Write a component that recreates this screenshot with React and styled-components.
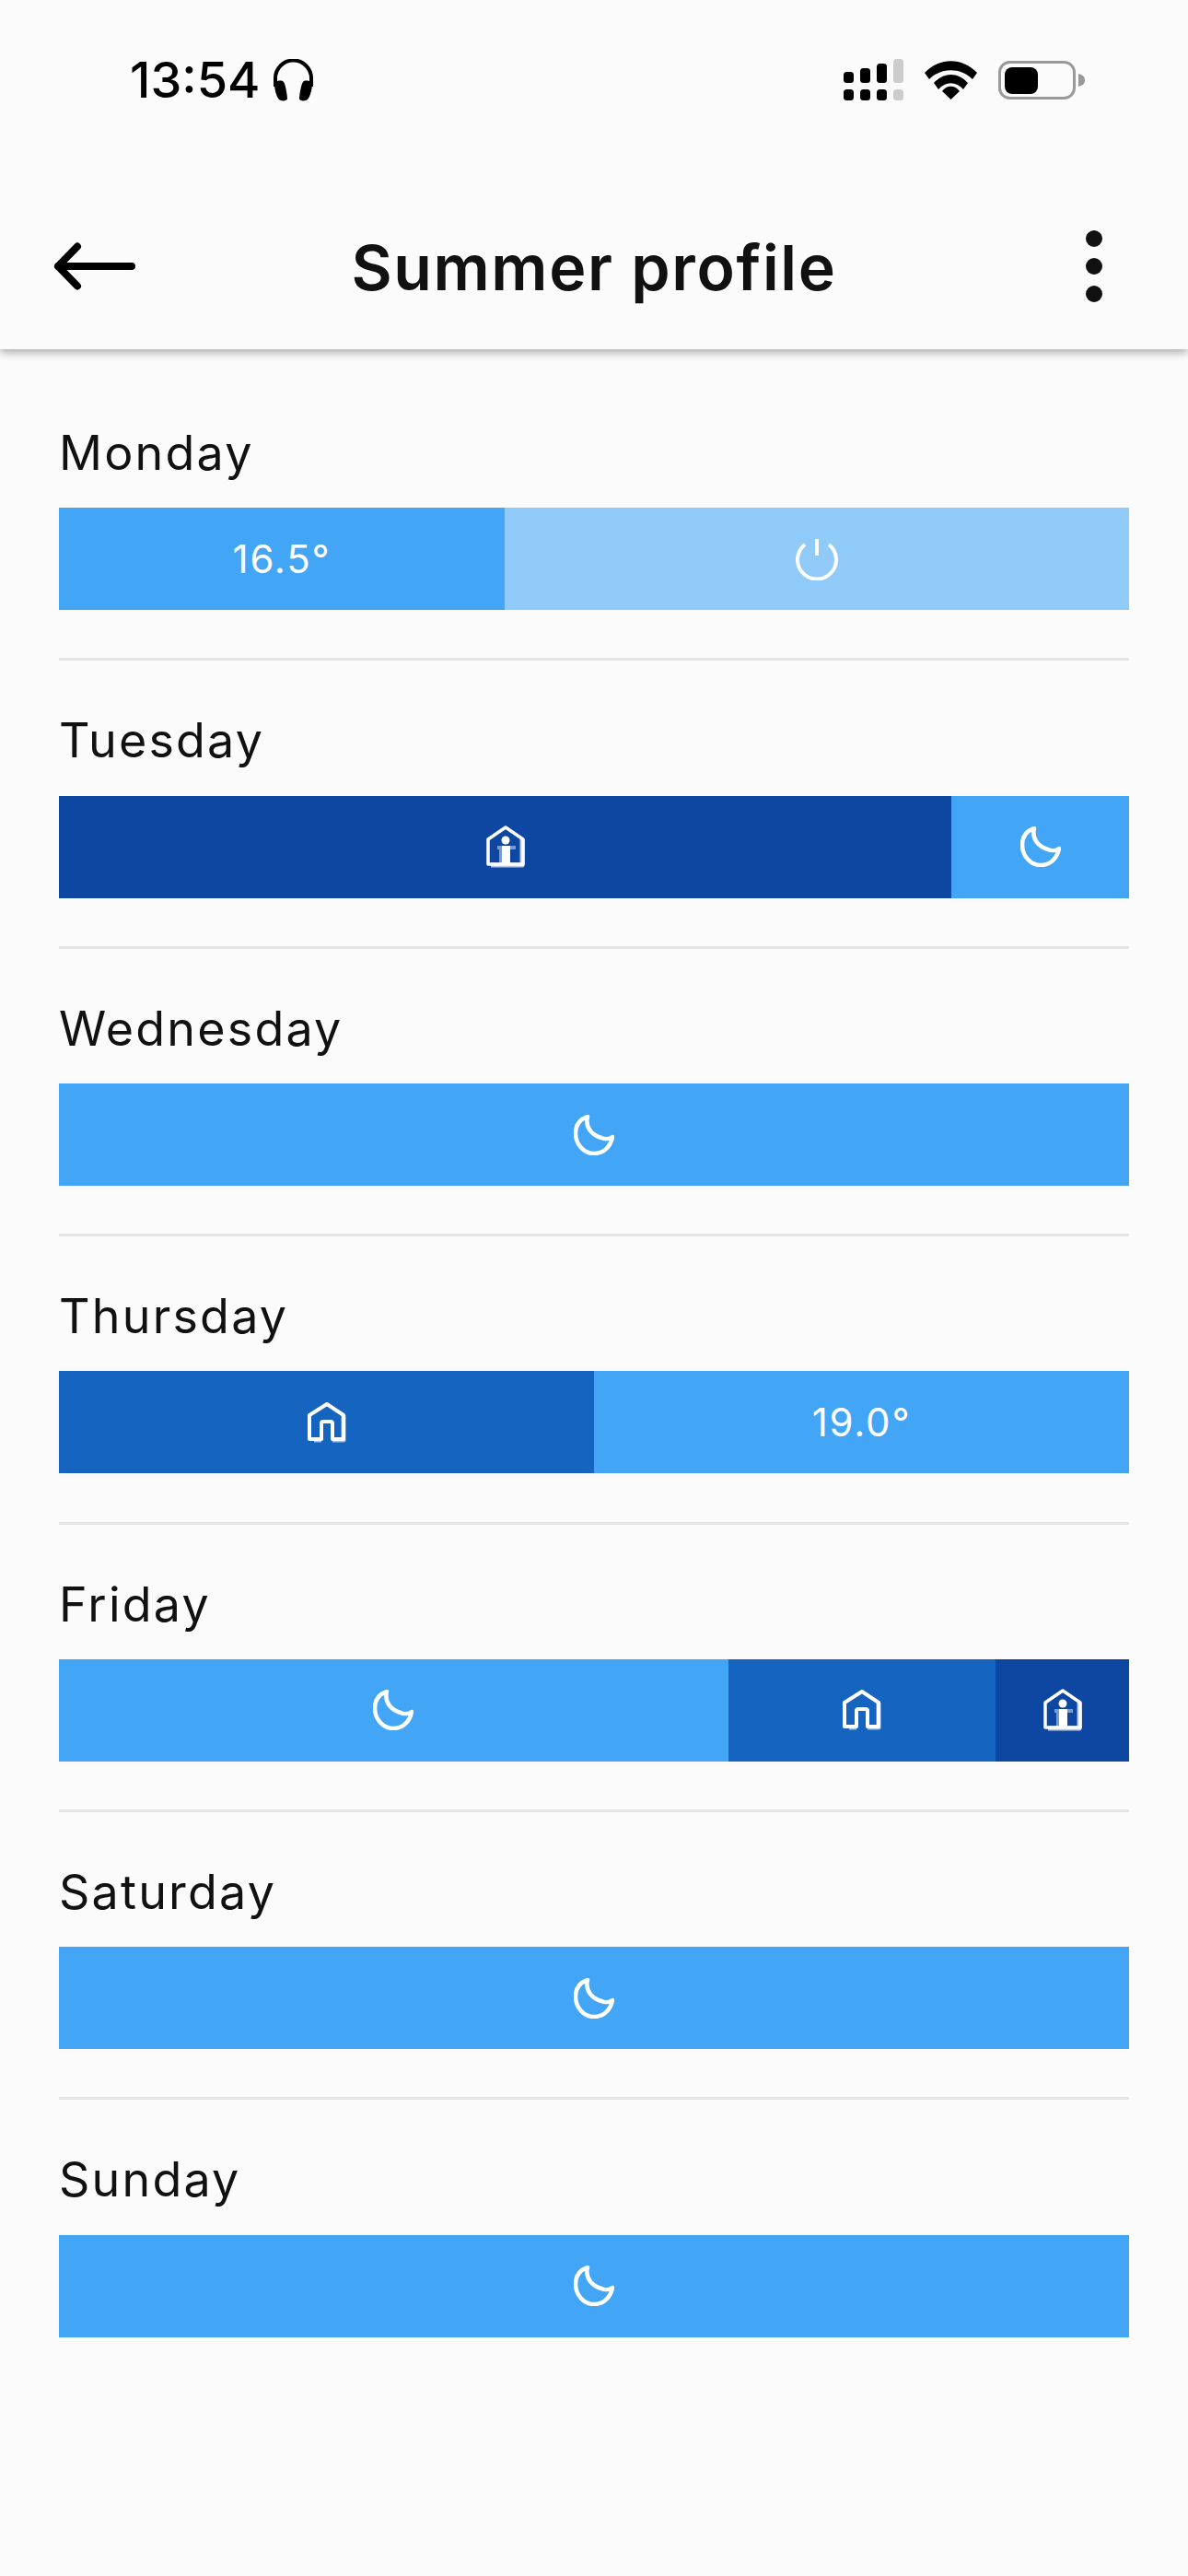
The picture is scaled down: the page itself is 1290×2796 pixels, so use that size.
import React from "react";
import styled, { createGlobalStyle } from "styled-components";

const LIGHT = "#42a5f5";
const PALE = "#90caf9";
const MID = "#1565c0";
const DARK = "#0d47a1";

const days = [
  { name: "Monday", slots: [{ w: 484, bg: LIGHT, text: "16.5°" }, { w: 678, bg: PALE, icon: "power" }] },
  { name: "Tuesday", slots: [{ w: 969, bg: DARK, icon: "away" }, { w: 193, bg: LIGHT, icon: "moon" }] },
  { name: "Wednesday", slots: [{ w: 1162, bg: LIGHT, icon: "moon" }] },
  { name: "Thursday", slots: [{ w: 581, bg: MID, icon: "home" }, { w: 581, bg: LIGHT, text: "19.0°" }] },
  { name: "Friday", slots: [{ w: 726.5, bg: LIGHT, icon: "moon" }, { w: 290.5, bg: MID, icon: "home" }, { w: 145, bg: DARK, icon: "away" }] },
  { name: "Saturday", slots: [{ w: 1162, bg: LIGHT, icon: "moon" }] },
  { name: "Sunday", slots: [{ w: 1162, bg: LIGHT, icon: "moon" }] },
];

const SlotIcon = ({ type }) => {
  if (type === "power") {
    return (
      <svg width="46" height="46" viewBox="0 0 46 46" fill="none" stroke="#fff" strokeWidth="4">
        <path d="M23 1v18" />
        <path d="M10 7a21 21 0 1 0 26 0" />
      </svg>
    );
  }
  if (type === "moon") {
    return (
      <svg width="44" height="44" viewBox="0 0 44 44" fill="none" stroke="#fff" strokeWidth="4.5" strokeLinejoin="round">
        <path d="M15 2C6 5 2 12 2 20c0 12 9 22 20 22 10 0 18-7 20-18-3 2-8 3-12 1C20 22 12 14 15 2z" />
      </svg>
    );
  }
  if (type === "home") {
    return (
      <svg width="44" height="44" viewBox="0 0 44 44" fill="none" strokeLinejoin="round">
        <path d="M40 14v27H28M16 41H8" stroke="#fff" strokeOpacity="0.6" strokeWidth="5" />
        <path d="M22 2L3 14v26h13V23q0-2 2-2h8q2 0 2 2v17h12V14z" stroke="#fff" strokeWidth="4" />
      </svg>
    );
  }
  return (
    <svg width="44" height="46" viewBox="0 0 44 46" fill="none" strokeLinejoin="round">
      <path d="M40 15v28H6" stroke="#fff" strokeOpacity="0.7" strokeWidth="5" />
      <path d="M22 2L3 15v27h38V15z" stroke="#fff" strokeWidth="3.5" />
      <path d="M13 24h20M17 24v18" stroke="#fff" strokeOpacity="0.45" strokeWidth="4" />
      <circle cx="22" cy="16" r="4.5" fill="#fff" />
      <path d="M18 22h9v20h-9z" fill="#fff" />
    </svg>
  );
};

export default function App() {
  return (
    <>
      <GlobalStyle />
      <Page>
        <Header>
          <StatusBar>
            <StatusLeft>
              <Clock>13:54</Clock>
              <svg width="45" height="46" viewBox="0 0 45 46">
                <path d="M3 30V21a19.5 19.5 0 0 1 39 0v9" fill="none" stroke="#000" strokeWidth="4" />
                <path d="M2 27c0-3 8-5 10-2 2 2 4 15 4 18 0 3-7 3-9 1-3-3-5-12-5-17zM43 27c0-3-8-5-10-2-2 2-4 15-4 18 0 3 7 3 9 1 3-3 5-12 5-17z" fill="#000" />
              </svg>
            </StatusLeft>
            <StatusRight>
              <svg width="65" height="45" viewBox="0 0 65 45">
                <rect x="0" y="14" width="11" height="12" rx="3.5" />
                <rect x="0" y="33" width="11" height="12" rx="3.5" />
                <rect x="18" y="10" width="11" height="16" rx="3.5" />
                <rect x="18" y="33" width="11" height="12" rx="3.5" />
                <rect x="36" y="5" width="11" height="21" rx="3.5" />
                <rect x="36" y="33" width="11" height="12" rx="3.5" />
                <rect x="54" y="0" width="11" height="26" rx="3.5" fill="#ccc" />
                <rect x="54" y="33" width="11" height="12" rx="3.5" fill="#ccc" />
              </svg>
              <svg width="57" height="42" viewBox="0 0 57 42">
                <path d="M0 13C16 -4 41 -4 57 13l-5 7C39 7 18 7 5 20z" />
                <path d="M10 24C21 12 36 12 47 24l-5 7C34 22 23 22 15 31z" />
                <path d="M28.5 42L19 33C24 26 33 26 38 33z" />
              </svg>
              <svg width="94" height="42" viewBox="0 0 94 42">
                <rect x="1.5" y="1.5" width="81" height="39" rx="11" fill="none" stroke="#999" strokeWidth="3" />
                <rect x="7" y="7" width="36" height="29" rx="8" fill="#000" />
                <path d="M87 14c4 1 7 3 7 7s-3 6-7 7z" fill="#999" />
              </svg>
            </StatusRight>
          </StatusBar>
          <TitleRow>
            <svg width="90" height="52" viewBox="0 0 90 52" fill="none" stroke="#000" strokeWidth="8" strokeLinecap="round" strokeLinejoin="round">
              <path d="M5 26h80M26 4.5L5 26l21 21.5" />
            </svg>
            <Title>Summer profile</Title>
            <Kebab>
              <Dot />
              <Dot />
              <Dot />
            </Kebab>
          </TitleRow>
        </Header>
        <DayList>
          {days.map((day) => (
            <DayRow key={day.name}>
              <DayName>{day.name}</DayName>
              <Bar>
                {day.slots.map((slot, i) => (
                  <Slot key={i} $width={slot.w} $bg={slot.bg}>
                    {slot.text ? slot.text : <SlotIcon type={slot.icon} />}
                  </Slot>
                ))}
              </Bar>
            </DayRow>
          ))}
        </DayList>
      </Page>
    </>
  );
}

const GlobalStyle = createGlobalStyle`
  html, body {
    margin: 0;
    padding: 0;
    background: #fbfbfb;
  }
`;

const Page = styled.div`
  width: 1290px;
  height: 2796px;
  overflow: hidden;
  background: #fbfbfb;
  font-family: Inter, "Liberation Sans", sans-serif;
  color: #111;
`;

const Header = styled.header`
  height: 379px;
  display: flex;
  flex-direction: column;
  background: #fbfbfb;
  box-shadow: 0 4px 9px rgba(0, 0, 0, 0.3);
`;

const StatusBar = styled.div`
  height: 199px;
  padding: 64px 112px 0 141px;
  box-sizing: border-box;
  display: flex;
  align-items: flex-start;
  justify-content: space-between;
`;

const StatusLeft = styled.div`
  display: flex;
  align-items: center;
  gap: 14px;
`;

const Clock = styled.span`
  font-size: 54px;
  font-weight: 500;
  line-height: 46px;
  color: #000;
`;

const StatusRight = styled.div`
  display: flex;
  align-items: center;
  gap: 23px;
`;

const TitleRow = styled.div`
  height: 180px;
  padding: 0 58px;
  display: grid;
  grid-template-columns: 1fr auto 1fr;
  align-items: center;
`;

const Title = styled.h1`
  margin: 0;
  padding-top: 2px;
  font-size: 68px;
  font-weight: 600;
  letter-spacing: 1.6px;
`;

const Kebab = styled.div`
  justify-self: end;
  margin-right: 35px;
  display: flex;
  flex-direction: column;
  gap: 12px;
`;

const Dot = styled.span`
  width: 18px;
  height: 18px;
  border-radius: 50%;
  background: #111;
`;

const DayList = styled.main`
  padding: 26px 64px 0;
`;

const DayRow = styled.section`
  height: 312.4px;
  box-sizing: border-box;
  padding-top: 56px;
  border-bottom: 3px solid #e4e4e4;

  &:last-child {
    border-bottom: none;
  }
`;

const DayName = styled.div`
  height: 90.3px;
  font-size: 52px;
  line-height: 62px;
  letter-spacing: 2.2px;
`;

const Bar = styled.div`
  height: 111px;
  display: flex;
`;

const Slot = styled.div`
  width: ${(p) => p.$width}px;
  background: ${(p) => p.$bg};
  display: flex;
  align-items: center;
  justify-content: center;
  color: #fff;
  font-size: 42px;
  letter-spacing: 1.8px;
`;
